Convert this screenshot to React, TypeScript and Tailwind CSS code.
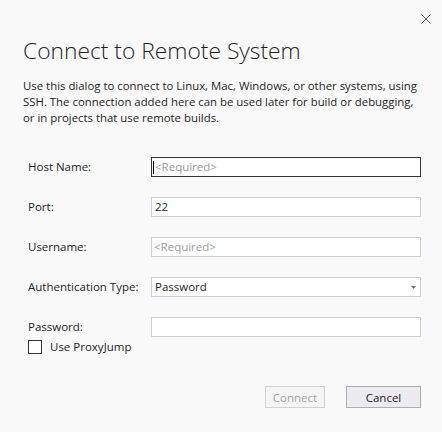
import { useState } from 'react';

const font = { fontFamily: '"Open Sans", "Noto Sans", sans-serif' };

function Row({ label, children }: { label: string; children: React.ReactNode }) {
    return (
        <div className="flex items-center h-5">
            <label className="w-[123px] shrink-0 text-[11.5px] text-[#1e1e1e]">{label}</label>
            <div className="flex-1">{children}</div>
        </div>
    );
}

export default function App() {
    const [proxy, setProxy] = useState(false);

    return (
        <div style={font} className="relative w-[442px] h-[432px] bg-[#f9f9f9] text-[#1e1e1e] overflow-hidden">
            {/* close */}
            <button className="absolute top-[14px] left-[421px] w-[10px] h-[10px]" aria-label="Close">
                <svg viewBox="0 0 10 10" className="w-[10px] h-[10px]">
                    <path d="M0.5 0.5 L9.5 9.5 M9.5 0.5 L0.5 9.5" stroke="#5a5a5a" strokeWidth="1" />
                </svg>
            </button>

            <div className="px-[23px] pt-[36px]">
                <h1 className="text-[22.8px] font-light leading-[30px] text-[#1e1e1e]">
                    Connect to Remote System
                </h1>
                <p className="mt-[12px] text-[11.4px] leading-[16px] whitespace-nowrap">
                    Use this dialog to connect to Linux, Mac, Windows, or other systems, using<br />
                    SSH. The connection added here can be used later for build or debugging,<br />
                    or in projects that use remote builds.
                </p>
            </div>

            <div className="pl-[28px] pr-[21px] mt-[31px] flex flex-col gap-5">
                <Row label="Host Name:">
                    <div className="h-5 border border-[#333337] bg-white flex items-center pl-[1px] text-[11.5px] text-[#9a9a9a]">
                        <span className="w-px h-[13px] bg-black mr-[1px]" />
                        &lt;Required&gt;
                    </div>
                </Row>
                <Row label="Port:">
                    <div className="h-5 border border-[#cccedb] bg-white flex items-center pl-[3px] text-[11.5px]">22</div>
                </Row>
                <Row label="Username:">
                    <div className="h-5 border border-[#cccedb] bg-white flex items-center pl-[2px] text-[11.5px] text-[#9a9a9a]">
                        &lt;Required&gt;
                    </div>
                </Row>
                <Row label="Authentication Type:">
                    <div className="h-5 border border-[#cccedb] bg-white flex items-center justify-between pl-[3px] pr-[4px] text-[11.5px]">
                        <span>Password</span>
                        <svg viewBox="0 0 5 3" className="w-[5px] h-[3px]">
                            <path d="M0 0 H5 L2.5 3 Z" fill="#717171" />
                        </svg>
                    </div>
                </Row>
                <Row label="Password:">
                    <div className="h-5 border border-[#cccedb] bg-white" />
                </Row>
            </div>

            <label className="ml-[28px] mt-[1px] flex items-center gap-[8px] text-[11.5px] cursor-pointer w-fit">
                <span
                    onClick={() => setProxy(!proxy)}
                    className="w-[14px] h-[14px] border border-[#333337] bg-white flex items-center justify-center text-[10px]"
                >
                    {proxy ? '✓' : ''}
                </span>
                Use ProxyJump
            </label>

            <div className="flex justify-end gap-[21px] pr-[21px] mt-[31px]">
                <button
                    disabled
                    className="w-[60px] h-[22px] border border-[#d2d2d2] bg-[#f5f5f5] text-[11.5px] text-[#a2a4a5]"
                >
                    Connect
                </button>
                <button className="w-[75px] h-[22px] border border-[#adadad] bg-[#ececf0] text-[11.5px] text-[#1e1e1e]">
                    Cancel
                </button>
            </div>
        </div>
    );
}
